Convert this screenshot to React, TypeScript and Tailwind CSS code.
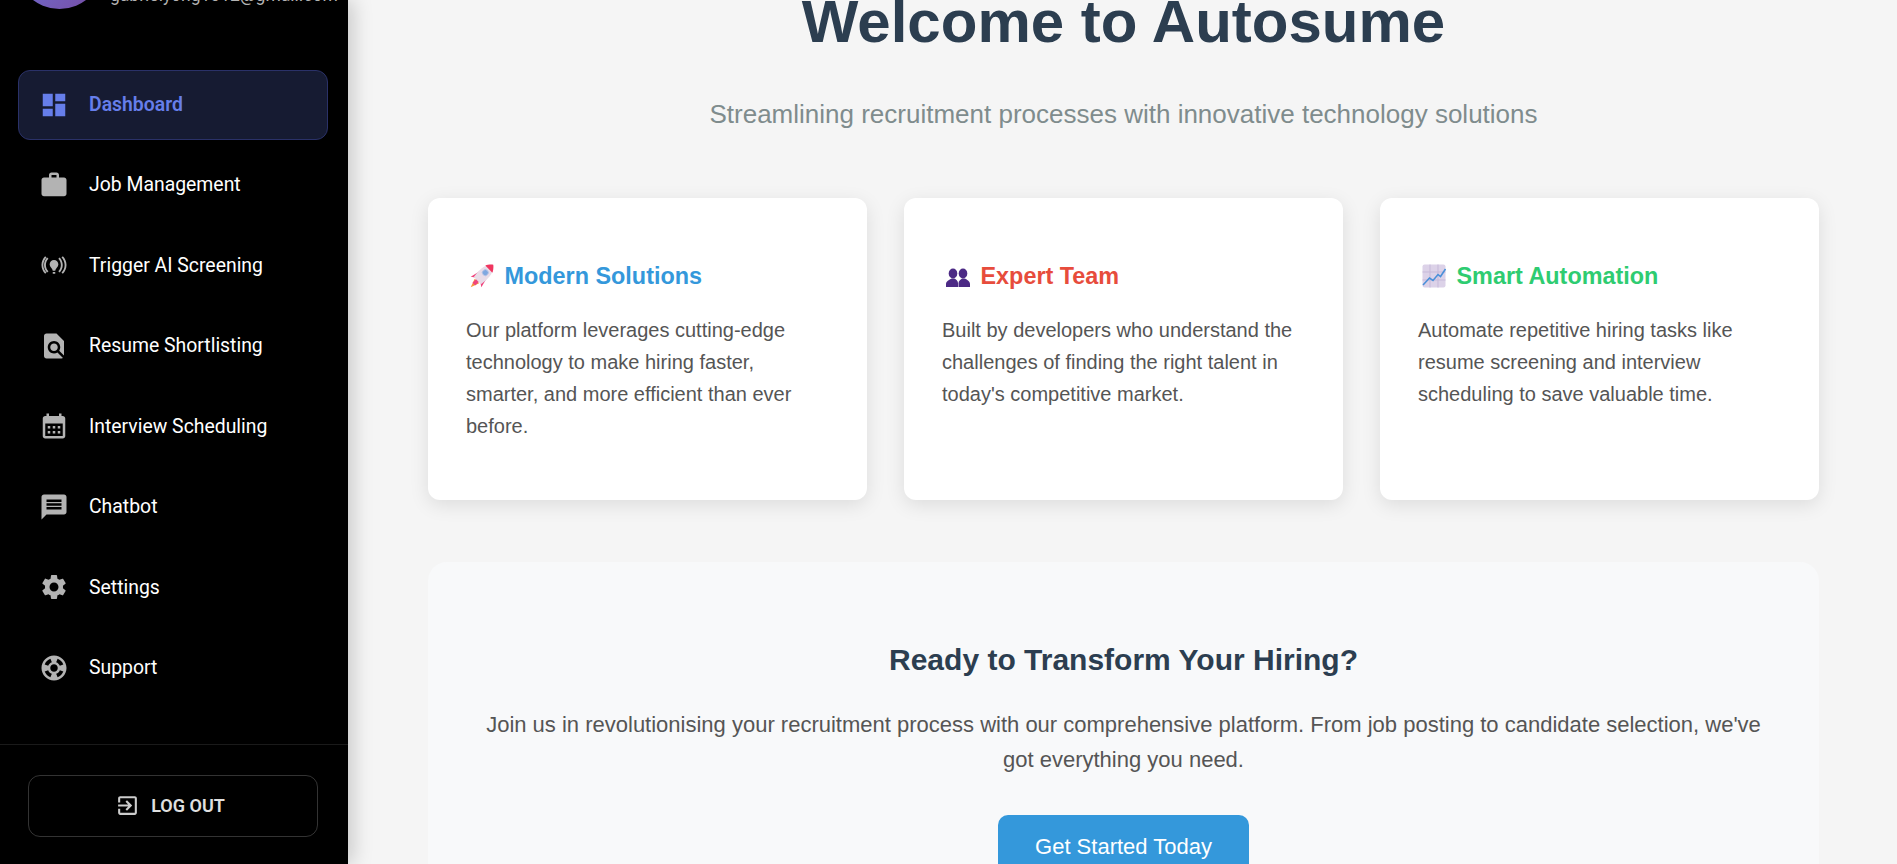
import React from "react";

const I = ({ d, cls = "text-[#b3b3b3]" }: { d: string; cls?: string }) => (
  <svg viewBox="0 0 24 24" className={"h-[30px] w-[30px] shrink-0 fill-current " + cls}>
    <path d={d} />
  </svg>
);

const icons = {
  dash: "M3 13h8V3H3v10zm0 8h8v-6H3v6zm10 0h8V11h-8v10zm0-18v6h8V3h-8z",
  work: "M20 6h-4V4c0-1.11-.89-2-2-2h-4c-1.11 0-2 .89-2 2v2H4c-1.11 0-1.99.89-1.99 2L2 19c0 1.11.89 2 2 2h16c1.11 0 2-.89 2-2V8c0-1.11-.89-2-2-2zm-6 0h-4V4h4v2z",
  cast: "M15.5 11.5c0 2-2.5 3.5-2.5 5h-2c0-1.5-2.5-3-2.5-5C8.5 9.57 10.07 8 12 8s3.5 1.57 3.5 3.5zm-2.5 6h-2V19h2v-1.5zm9-5.5c0-2.76-1.12-5.26-2.93-7.07l-1.06 1.06C19.55 7.53 20.5 9.66 20.5 12c0 2.34-.95 4.47-2.49 6.01l1.06 1.06C20.88 17.26 22 14.76 22 12zM3.5 12c0-2.34.95-4.47 2.49-6.01L4.93 4.93C3.12 6.74 2 9.24 2 12c0 2.76 1.12 5.26 2.93 7.07l1.06-1.06C4.45 16.47 3.5 14.34 3.5 12zm14 0c0 1.93-.78 3.68-2.05 4.95l1.06 1.06C18.07 16.44 19 14.33 19 12c0-2.33-.93-4.44-2.49-6.01l-1.06 1.06C16.72 8.32 17.5 10.07 17.5 12zM7.55 16.95C6.28 15.68 5.5 13.93 5.5 12c0-1.93.78-3.68 2.05-4.95L6.49 5.99C4.93 7.56 4 9.67 4 12c0 2.33.93 4.44 2.49 6.01l1.06-1.06z",
  find: "M20 19.59V8l-6-6H6c-1.1 0-1.99.9-1.99 2L4 20c0 1.1.89 2 1.99 2H18c.45 0 .85-.15 1.19-.4l-4.43-4.43c-.8.52-1.74.83-2.76.83-2.76 0-5-2.24-5-5s2.24-5 5-5 5 2.24 5 5c0 1.02-.31 1.96-.83 2.75L20 19.59zM9 13c0 1.66 1.34 3 3 3s3-1.34 3-3-1.34-3-3-3-3 1.34-3 3z",
  cal: "M19 4h-1V2h-2v2H8V2H6v2H5c-1.11 0-1.99.9-1.99 2L3 20c0 1.1.89 2 2 2h14c1.1 0 2-.9 2-2V6c0-1.1-.9-2-2-2zm0 16H5V10h14v10zM9 14H7v-2h2v2zm4 0h-2v-2h2v2zm4 0h-2v-2h2v2zm-8 4H7v-2h2v2zm4 0h-2v-2h2v2zm4 0h-2v-2h2v2z",
  chat: "M20 2H4c-1.1 0-1.99.9-1.99 2L2 22l4-4h14c1.1 0 2-.9 2-2V4c0-1.1-.9-2-2-2zm-2 12H6v-2h12v2zm0-3H6V9h12v2zm0-3H6V6h12v2z",
  gear: "M19.14 12.94c.04-.3.06-.61.06-.94 0-.32-.02-.64-.07-.94l2.03-1.58c.18-.14.23-.41.12-.61l-1.92-3.32c-.12-.22-.37-.29-.59-.22l-2.39.96c-.5-.38-1.03-.7-1.62-.94l-.36-2.54c-.04-.24-.24-.41-.48-.41h-3.84c-.24 0-.43.17-.47.41l-.36 2.54c-.59.24-1.13.57-1.62.94l-2.39-.96c-.22-.08-.47 0-.59.22L2.74 8.87c-.12.21-.08.47.12.61l2.03 1.58c-.05.3-.09.63-.09.94s.02.64.07.94l-2.03 1.58c-.18.14-.23.41-.12.61l1.92 3.32c.12.22.37.29.59.22l2.39-.96c.5.38 1.03.7 1.62.94l.36 2.54c.05.24.24.41.48.41h3.84c.24 0 .44-.17.47-.41l.36-2.54c.59-.24 1.13-.56 1.62-.94l2.39.96c.22.08.47 0 .59-.22l1.92-3.32c.12-.22.07-.47-.12-.61l-2.01-1.58zM12 15.6c-1.98 0-3.6-1.62-3.6-3.6s1.62-3.6 3.6-3.6 3.6 1.62 3.6 3.6-1.62 3.6-3.6 3.6z",
  help: "M12 2C6.48 2 2 6.48 2 12s4.48 10 10 10 10-4.48 10-10S17.52 2 12 2zm7.46 7.12l-2.78 1.15c-.51-1.36-1.58-2.44-2.95-2.94l1.15-2.78c2.1.8 3.77 2.47 4.58 4.57zM12 15c-1.66 0-3-1.34-3-3s1.34-3 3-3 3 1.34 3 3-1.34 3-3 3zM9.13 4.54l1.17 2.78c-1.38.5-2.47 1.59-2.98 2.97L4.54 9.13c.81-2.11 2.48-3.78 4.59-4.59zM4.54 14.87l2.78-1.15c.51 1.38 1.59 2.46 2.97 2.96l-1.17 2.78c-2.1-.81-3.77-2.48-4.58-4.59zm10.34 4.59l-1.15-2.78c1.37-.51 2.45-1.59 2.95-2.97l2.78 1.17c-.81 2.1-2.48 3.77-4.58 4.58z",
};

const items: [keyof typeof icons, string][] = [
  ["work", "Job Management"],
  ["cast", "Trigger AI Screening"],
  ["find", "Resume Shortlisting"],
  ["cal", "Interview Scheduling"],
  ["chat", "Chatbot"],
  ["gear", "Settings"],
  ["help", "Support"],
];

const Rocket = () => (
  <svg viewBox="0 0 24 24" className="mr-[11px] ml-[3.5px] h-[24px] w-[24px] shrink-0">
    <title>🚀</title>
    <g transform="translate(12 12) rotate(45) scale(1.25) translate(-12 -12.75)">
      <path d="M9.5 18.5h5L12 25.5z" fill="#f59a3c" />
      <path d="M8 11.5L6 19.5l3-2zM16 11.5l2 8-3-2z" fill="#f0457d" />
      <path d="M10.5 16h3v6h-3z" fill="#f0457d" />
      <path d="M12 0c5 4 5.5 11 4 18H8C6.5 11 7 4 12 0z" fill="#e8dce8" />
      <path d="M12 0c2 1.6 3.3 3.4 4 5H8c.7-1.6 2-3.4 4-5z" fill="#f0355f" />
      <circle cx="12" cy="9" r="2.4" fill="#7fa8e0" stroke="#b9c4e6" strokeWidth=".7" />
    </g>
  </svg>
);

const Team = () => (
  <svg viewBox="0 0 24 24" className="mr-[11px] ml-[3.5px] h-[24px] w-[24px] shrink-0 text-[#4c2a85]">
    <title>👥</title>
    <g fill="currentColor">
      <ellipse cx="7" cy="9.5" rx="4.3" ry="5" />
      <path d="M0 23v-3c0-3 4-4.5 5.5-5.5h3c1.5 1 3.5 2 3.5 4.5v4z" />
      <ellipse cx="17" cy="9.5" rx="4.3" ry="5" />
      <path d="M12.5 23v-4c0-2.5 2.5-3.5 3.5-4.5h3c1.5 1 5 2.5 5 5.5v3z" />
    </g>
  </svg>
);

const Chart = () => (
  <svg viewBox="0 0 24 24" className="mr-[11px] ml-[3.5px] h-[24px] w-[24px] shrink-0">
    <title>📈</title>
    <rect x="0.5" y="0.5" width="23" height="23" rx="2" fill="#dcd2e8" />
    <path d="M8 .5v23M16 .5v23M.5 8h23M.5 16h23" stroke="#c6b9d9" strokeWidth="1" />
    <path d="M1 21l6.5-7 3.5 2.5 5-6 2.5 2L23.5 5" fill="none" stroke="#4a90d9" strokeWidth="1.6" />
  </svg>
);

const cards = [
  { e: <Rocket />, t: "Modern Solutions", c: "text-[#3498db]", b: "Our platform leverages cutting-edge technology to make hiring faster, smarter, and more efficient than ever before." },
  { e: <Team />, t: "Expert Team", c: "text-[#e74c3c]", b: "Built by developers who understand the challenges of finding the right talent in today's competitive market." },
  { e: <Chart />, t: "Smart Automation", c: "text-[#2ecc71]", b: "Automate repetitive hiring tasks like resume screening and interview scheduling to save valuable time." },
];

export default function App() {
  return (
    <div className="flex h-[864px] overflow-hidden bg-[#f5f5f5] font-['Liberation_Sans',Arial,sans-serif]">
      <aside className="relative z-10 flex h-[864px] w-[348px] shrink-0 flex-col bg-black font-['Roboto',sans-serif] shadow-[4px_0_20px_rgba(0,0,0,0.2)]">
        <div className="flex h-[70px] shrink-0 items-start gap-[7px] pl-[16px]">
          <div className="-mt-[78px] h-[87px] w-[87px] shrink-0 rounded-full bg-gradient-to-br from-[#667eea] to-[#764ba2]" />
          <div className="-mt-[15px] text-[17.5px] leading-[20px] text-[#b3b3b3]">gabrielyong1012@gmail.com</div>
        </div>
        <nav className="flex flex-col pl-[18px] pr-[20px]">
          <div className="flex h-[70px] items-center gap-[20px] rounded-[12px] border border-[#2a3168] bg-[#161b32] pl-[20px]">
            <I d={icons.dash} cls="text-[#667eea]" />
            <span className="text-[19.4px] font-semibold text-[#667eea]">Dashboard</span>
          </div>
          <div className="-mt-[0.6px] flex flex-col">
            {items.map(([k, t]) => (
              <div key={t} className="mt-[10.5px] flex h-[70px] items-center gap-[20px] pl-[21px]">
                <I d={icons[k]} />
                <span className="text-[19.4px] text-white">{t}</span>
              </div>
            ))}
          </div>
        </nav>
        <div className="mt-auto border-t border-white/10 pb-[27px] pl-[28px] pr-[30px] pt-[30px]">
          <div className="flex h-[62px] items-center justify-center gap-[11px] rounded-[12px] border border-white/20 pb-[1px] pr-[6px] text-[18px] font-semibold text-[#e0e0e0]">
            <svg viewBox="0 0 24 24" className="h-[25px] w-[25px] fill-current text-[#cccccc]">
              <path d="M10.09 15.59L11.5 17l5-5-5-5-1.41 1.41L12.67 11H3v2h9.67l-2.58 2.59zM19 3H5c-1.11 0-2 .9-2 2v4h2V5h14v14H5v-4H3v4c0 1.1.89 2 2 2h14c1.1 0 2-.9 2-2V5c0-1.1-.9-2-2-2z" />
            </svg>
            LOG OUT
          </div>
        </div>
      </aside>
      <main className="min-w-0 flex-1 pl-[80px] pr-[78px]">
        <div className="-mt-[13px] text-center">
          <h1 className="text-[60px] font-bold leading-[70px] text-[#2c3e50]">Welcome to Autosume</h1>
          <p className="mt-[42px] text-[26px] leading-[30px] text-[#7f8c8d]">Streamlining recruitment processes with innovative technology solutions</p>
        </div>
        <div className="mt-[69px] grid grid-cols-3 gap-[37px]">
          {cards.map((c) => (
            <div key={c.t} className="h-[302px] rounded-[12px] bg-white px-[38px] pt-[64px] shadow-[0_5px_19px_rgba(0,0,0,0.1)]">
              <h3 className={"flex h-[28px] items-center text-[23.4px] font-bold leading-[28px] " + c.c}>{c.e}{c.t}</h3>
              <p className="mt-[24px] text-[20px] leading-[32px] text-[#555]">{c.b}</p>
            </div>
          ))}
        </div>
        <section className="mt-[62px] rounded-[19px] bg-[#f8f9fa] px-[48px] pb-[40px] pt-[80px] text-center">
          <h2 className="text-[30px] font-bold leading-[36px] text-[#2c3e50]">Ready to Transform Your Hiring?</h2>
          <p className="mt-[28.5px] text-[22px] leading-[35.2px] text-[#555]">Join us in revolutionising your recruitment process with our comprehensive platform. From job posting to candidate selection, we've got everything you need.</p>
          <div className="mx-auto mt-[38px] w-fit rounded-[10px] bg-[#3498db] px-[37.5px] py-[18.75px] text-[22px] leading-[25px] text-white">Get Started Today</div>
        </section>
      </main>
    </div>
  );
}
